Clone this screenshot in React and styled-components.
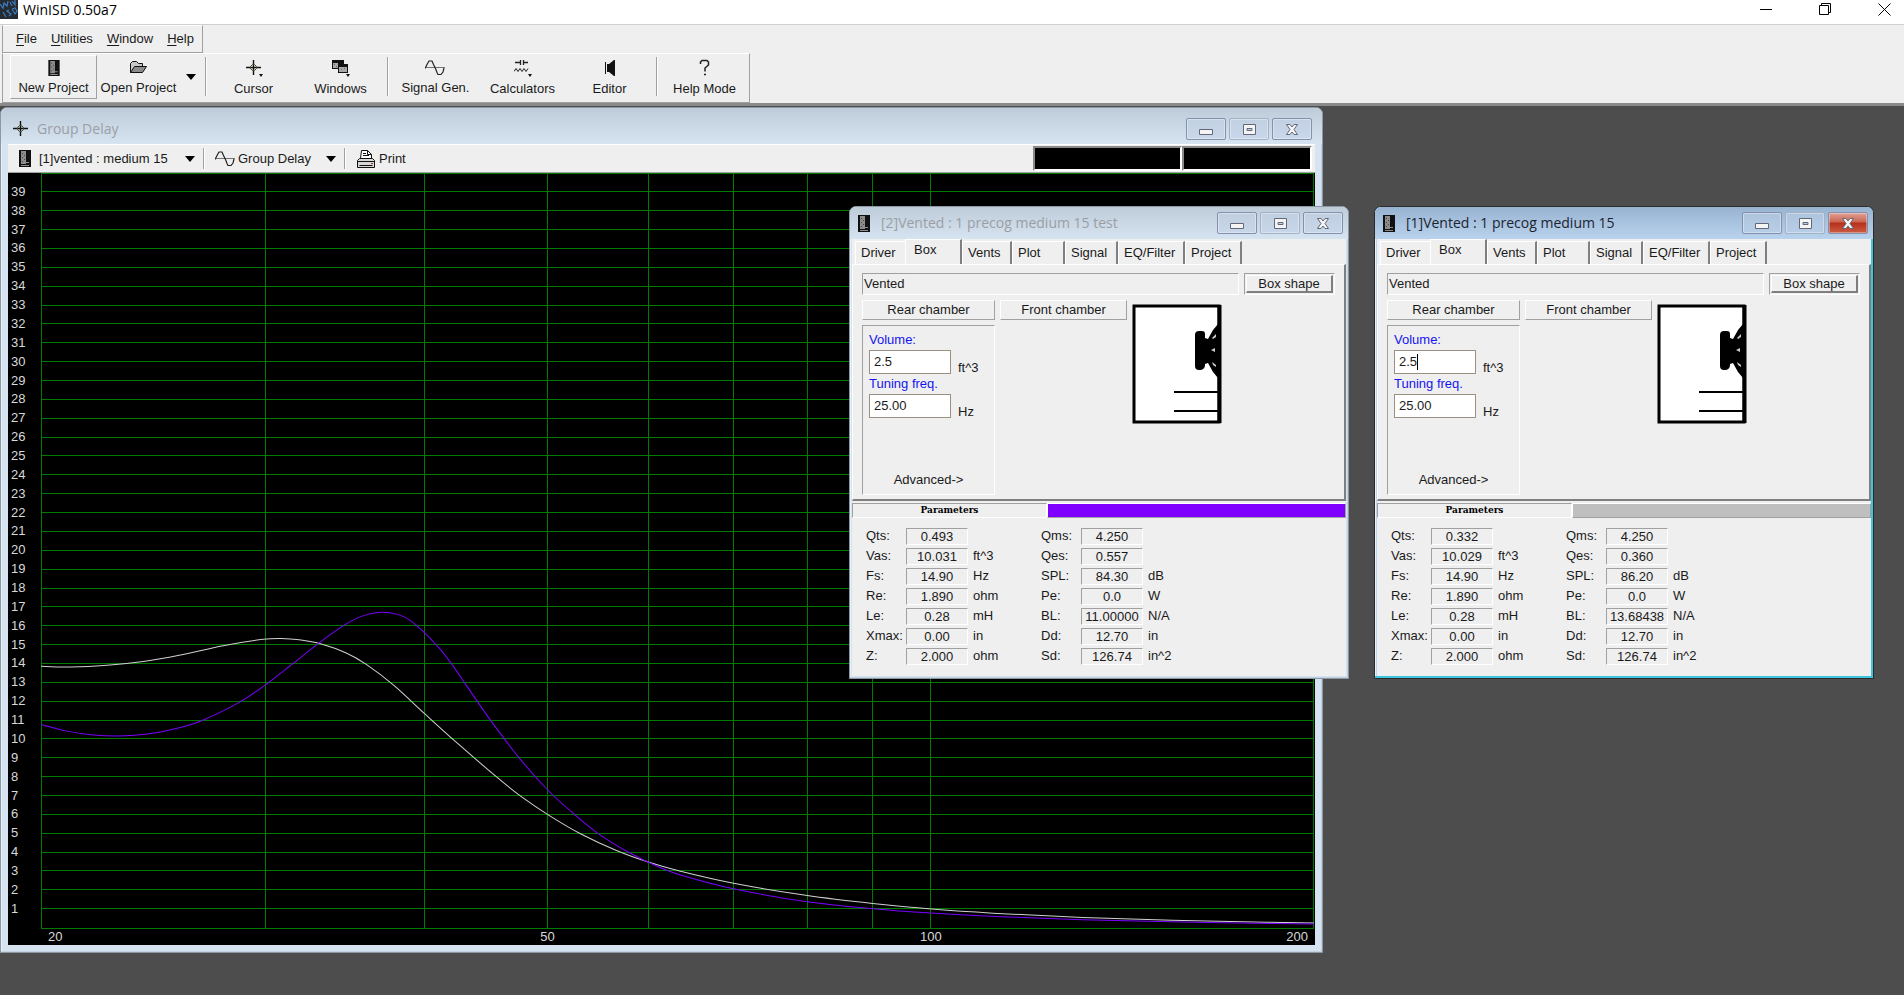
import { useState } from "react";
import styled, { createGlobalStyle, css } from "styled-components";

const GlobalStyle = createGlobalStyle`
  * { box-sizing: border-box; }

  body {
    margin: 0;
    background: #4d4d4d;
    color: #1a1a1a;
    font-family: "Liberation Sans", Arial, sans-serif;
    font-size: 13px;
    line-height: 20px;
  }

  button, input, select {
    font: inherit;
    color: inherit;
    margin: 0;
    padding: 0;
    border: none;
    border-radius: 0;
    background: none;
  }
`;

const sunken = css`
  border: 1px solid;
  border-color: #a0a0a0 #ffffff #ffffff #a0a0a0;
`;

const raised = css`
  border: 1px solid;
  border-color: #ffffff #a0a0a0 #a0a0a0 #ffffff;
`;

const Page = styled.div`
  display: flex;
  flex-direction: column;
  min-height: 100vh;
`;

const AppTitle = styled.header`
  display: flex;
  justify-content: space-between;
  height: 24px;
  background: #ffffff;
  color: #000;
  font-family: "Open Sans", "Noto Sans", sans-serif;
  font-size: 14px;

  h1 {
    display: flex;
    gap: 5px;
    margin: 0;
    font-size: inherit;
    font-weight: 400;
  }
`;

const AppControls = styled.div`
  display: flex;
  gap: 19px;
  height: 18px;

  button {
    display: flex;
    align-items: center;
    justify-content: center;
    width: 40px;
  }
`;

const Bars = styled.div`
  background: #efefef;
  border-top: 1px solid #d0d0d0;
  border-bottom: 3px solid #8a8a8a;
`;

const MenuBar = styled.nav`
  display: flex;
  align-items: center;
  gap: 14px;
  width: fit-content;
  height: 28px;
  padding: 0 8px 0 13px;
  margin-left: 2px;
  ${raised}
  border-left-color: #a0a0a0;

  u { text-underline-offset: 2px; }
`;

const ToolBar = styled.div`
  display: flex;
  width: fit-content;
  height: 50px;
  padding: 1px 1px 3px 7px;
  margin-left: 2px;
  ${raised}
  border-left-color: #a0a0a0;
`;

const ToolButton = styled.button`
  display: flex;
  flex-direction: column;
  align-items: center;
  gap: 2px;
  width: ${(p) => p.$width || 87}px;
  padding-top: 4px;
  white-space: nowrap;
  ${(p) => p.$raised && raised}

  svg { display: block; }
`;

const DropButton = styled.button`
  display: flex;
  align-items: center;
  justify-content: center;
  width: 22px;
`;

const Separator = styled.span`
  align-self: stretch;
  width: 2px;
  margin: ${(p) => p.$margin || "2px 3px 3px"};
  border-left: 1px solid #a0a0a0;
  border-right: 1px solid #ffffff;
`;

const Desktop = styled.main`
  position: relative;
  flex: 1;
  overflow: hidden;
`;

const Frame = styled.section`
  position: absolute;
  left: ${(p) => p.$x}px;
  top: ${(p) => p.$y}px;
  width: ${(p) => p.$w}px;
  padding: 0 ${(p) => p.$pad}px ${(p) => p.$pad}px;
  background: ${(p) => (p.$active ? "#b9d4ef" : "#d6e4f2")};
  border: 1px solid ${(p) => (p.$active ? "#2b2b2b" : "#8d98a5")};
  border-radius: 7px 7px 0 0;
  box-shadow: ${(p) =>
    p.$active ? "inset -2px -2px 0 #3fc4e0, inset 1px 1px 0 #e6f3ff" : "inset -1px -1px 0 #c3d2e0, inset 1px 1px 0 #e8f0f8"};
`;

const TitleRow = styled.header`
  display: flex;
  align-items: center;
  gap: ${(p) => p.$gap}px;
  height: ${(p) => p.$h}px;
  margin: 0 -${(p) => p.$pad}px;
  padding: ${(p) => p.$inset};
  border-radius: 6px 6px 0 0;
  background: ${(p) =>
    p.$active ? "linear-gradient(#98b3d0, #b9d3ee)" : "linear-gradient(#becbd8, #d6e4f2)"};

  h2 {
    flex: 1;
    margin: 0;
    color: ${(p) => (p.$active ? "#1c2430" : "#9b9ea4")};
    font-family: "Open Sans", "Noto Sans", sans-serif;
    font-size: 14px;
    font-weight: 400;
    line-height: 20px;
  }
`;

const Captions = styled.div`
  display: flex;
  gap: 3px;
`;

const Caption = styled.button`
  display: flex;
  align-items: center;
  justify-content: center;
  width: 40px;
  height: 22px;
  border: 1px solid ${(p) => (p.$faint ? "#a3b1c4" : "#8291b0")};
  border-radius: 2px;
  box-shadow: inset 0 0 0 1px rgba(255, 255, 255, 0.35);
  background: ${(p) =>
    p.$red ? "linear-gradient(#e0a094, #cc6450 45%, #b5301a 50%, #cc5c44)" : "rgba(190, 205, 228, 0.5)"};
`;

const GraphBar = styled.div`
  display: flex;
  align-items: center;
  height: 29px;
  padding-left: 11px;
  background: #efefef;
  border-top: 1px solid #ffffff;
  border-bottom: 1px solid #a0a0a0;
`;

const Picker = styled.label`
  display: grid;
  grid-template-columns: auto 1fr;
  align-items: center;
  gap: ${(p) => p.$gap}px;

  select {
    width: ${(p) => p.$w}px;
    appearance: none;
    outline: none;
    background: url("data:image/svg+xml,%3Csvg xmlns='http://www.w3.org/2000/svg' width='10' height='6'%3E%3Cpath d='M0 0h10L5 6z'/%3E%3C/svg%3E") no-repeat right center;
  }
`;

const PrintButton = styled.button`
  display: flex;
  align-items: center;
  gap: 3px;
  margin-left: 6px;
`;

const Readouts = styled.div`
  display: flex;
  align-self: stretch;
  margin-left: auto;
  padding: 1px 3px 1px 2px;

  span {
    background: #000;
    border: 2px solid;
    border-color: #8a8a8a #ffffff #ffffff #8a8a8a;
  }

  span:first-child { width: 149px; }
  span:last-child { width: 130px; }
`;

const Chart = styled.svg`
  display: block;
  width: 100%;
  background: #000;
  fill: none;

  text {
    fill: #d8d8d8;
    font-size: 13px;
  }
`;

const Body = styled.div`
  background: #efefef;
  height: 437px;
`;

const Tabs = styled.div`
  display: flex;
  align-items: flex-end;
  height: 25px;
  padding-left: 3px;
`;

const Tab = styled.button`
  width: ${(p) => p.$w}px;
  height: ${(p) => (p.$on ? 25 : 23)}px;
  padding-left: ${(p) => (p.$on ? 8 : 5)}px;
  padding-bottom: ${(p) => (p.$on ? 4 : 0)}px;
  text-align: left;
  white-space: nowrap;
  border-top: 1px solid #ffffff;
  border-left: 1px solid #ffffff;
  border-right: ${(p) => (p.$flat ? "none" : "2px solid #7f7f7f")};
`;

const TabPage = styled.div`
  display: flex;
  flex-direction: column;
  gap: 5px;
  height: 237px;
  padding: 8px 9px 5px;
  border: 1px solid;
  border-width: 1px 2px 2px 1px;
  border-color: #ffffff #7f7f7f #7f7f7f #ffffff;
`;

const KindRow = styled.div`
  display: flex;
  gap: 5px;
  height: 22px;
`;

const Kind = styled.div`
  flex: 1;
  padding-left: 1px;
  ${sunken}
`;

const ShapeSlot = styled.div`
  display: flex;
  width: 91px;
  padding: 1px;
  ${sunken}

  button {
    flex: 1;
    line-height: 16px;
    border: 1px solid;
    border-width: 1px 2px 2px 1px;
    border-color: #ffffff #7f7f7f #7f7f7f #ffffff;
  }
`;

const Chambers = styled.div`
  display: grid;
  grid-template-columns: 133px 127px 90px;
  grid-template-rows: 20px auto;
  gap: 5px;

  svg {
    display: block;
    grid-column: 3;
    grid-row: 1 / 3;
    margin-top: 4px;
  }
`;

const ChamberButton = styled.button`
  line-height: 18px;
  ${raised}
`;

const Rear = styled.div`
  display: flex;
  flex-direction: column;
  height: 170px;
  padding: 4px 6px;
  ${sunken}

  > button {
    margin-top: auto;
    line-height: 20px;
  }
`;

const Field = styled.div`
  position: relative;
  display: grid;
  grid-template-columns: 82px auto;
  grid-template-rows: 20px 24px;
  column-gap: 7px;

  label {
    grid-column: 1 / 3;
    color: #1414f0;
  }

  input {
    width: 82px;
    padding: 0 4px;
    background: #ffffff;
    border: 1px solid #9c9080;
    outline: none;
  }

  span { line-height: 36px; }
`;

const Caret = styled.i`
  position: absolute;
  left: 23px;
  top: 24px;
  width: 1px;
  height: 16px;
  background: #000;
`;

const ParamBar = styled.div`
  display: flex;
  height: 15px;
  margin-top: 2px;

  h3 {
    width: 195px;
    margin: 0;
    text-align: center;
    color: #000;
    font-family: "DejaVu Serif", serif;
    font-size: 9px;
    font-weight: 700;
    line-height: 13px;
    ${sunken}
  }

  div {
    flex: 1;
    background: ${(p) => p.$colour};
    ${raised}
  }
`;

const Params = styled.div`
  display: flex;
  gap: 43px;
  padding: 8px 14px;
`;

const ParamTable = styled.table`
  width: 132px;
  table-layout: fixed;
  border-collapse: collapse;
  white-space: nowrap;

  tr { height: 20px; }

  th {
    width: 40px;
    padding: 0;
    font-weight: 400;
    text-align: left;
  }

  td {
    width: 62px;
    padding: 0;
    text-align: center;
  }

  td + td {
    width: 30px;
    padding-left: 5px;
    text-align: left;
  }

  output {
    display: block;
    height: 17px;
    line-height: 16px;
    ${sunken}
  }
`;

const CabinetIcon = () => (
  <svg width="12" height="17" viewBox="0 0 12 17">
    <path fill="#111" d="M0 0h12v17H0z" />
    <path fill="#8c8c8c" d="M2 1h5v13H2zM7 12h3v1H7zM2 15h8v1H2z" />
    <path fill="#444" d="M3 3h1v1H3zM5 5h1v1H5zM3 7h1v1H3zM5 9h1v1H5zM3 11h1v1H3z" />
  </svg>
);

const FolderIcon = () => (
  <svg width="19" height="17" viewBox="0 0 19 17">
    <path fill="#c8c8c8" stroke="#111" d="M1.500 13.500v-9l2-2h4l2 2h4v3" />
    <path fill="#8c8c8c" stroke="#111" d="M1.500 13.500l4-6h12l-4 6z" />
  </svg>
);

const CrossIcon = ({ menu }) => (
  <svg width="18" height="18" viewBox="0 0 18 18" fill="none" stroke="#111">
    <path strokeWidth="1.4" d="M8.500 1v15M1 8.500h15" />
    <path stroke="#444422" d="M5.500 7.500l2-2h2l2 2v2l-2 2h-2l-2-2z" />
    {menu && <path fill="#111" stroke="none" d="M14 15h4l-2 3z" />}
  </svg>
);

const WindowsIcon = () => (
  <svg width="18" height="18" viewBox="0 0 18 18">
    <path fill="#111" d="M0 1h12v9H0zM6 5h10v9H6z" />
    <path fill="#a8a8a8" d="M1 4h5v5H1zM7 8h8v5H7z" />
    <path fill="#666" d="M2 5h1v1H2zM4 7h1v1H4zM9 10h1v1H9zM12 9h1v1h-1z" />
    <path fill="#111" d="M14 15h4l-2 3z" />
  </svg>
);

const WaveIcon = () => (
  <svg width="21" height="17" viewBox="0 0 21 17" fill="none" stroke="#222">
    <path strokeWidth="1.2" d="M0 9.500l2-4 2-3.500h3l1.500 3.500 2 4 1.500 4 1 2h3l2-2.500 1-4" />
    <path d="M0 8.500h20" strokeWidth=".6" />
  </svg>
);

const CircuitIcon = () => (
  <svg width="18" height="18" viewBox="0 0 18 18" fill="none" stroke="#222">
    <path strokeWidth="1.3" d="M1 3.500h5M10 3.500h4M6.500 1v5M9.500 1v5" />
    <path d="M0 12.500l2-3 2 3 2-3 2 3 2-3 2 3 2-3" />
    <path fill="#111" stroke="none" d="M14 15h4l-2 3z" />
  </svg>
);

const SpeakerIcon = () => (
  <svg width="12" height="18" viewBox="0 0 12 18">
    <path fill="#111" d="M3 5h2l5-4h1v16h-1l-5-4H3z" />
    <path fill="#111" d="M1 3h1v12H1z" />
    <path fill="#efefef" d="M4 2l1 2 1 1zM4 16l1-2 1-1zM2 8h1v2H2z" />
  </svg>
);

const HelpIcon = () => (
  <svg width="12" height="18" viewBox="0 0 12 18" fill="none" stroke="#222" strokeWidth="1.5">
    <path d="M1.500 5V3l1.500-1.500h5L9.500 3v3L6 9v3.500M5 15.500h2" />
  </svg>
);

const PrinterIcon = () => (
  <svg width="20" height="20" viewBox="0 0 20 20" fill="none" stroke="#111">
    <path fill="#fff" d="M4.500 9.500l1-8h6l4 4v4z" />
    <path d="M7 4.500h3M7 6.500h6M11.500 1.500v4h4" />
    <path fill="#d8d8d8" d="M1.500 11.500l2-2h13l2 2v7h-17zM1.500 12.500h17M3.500 16.500h13" />
    <path stroke="#d02020" d="M15 14.500h2" />
  </svg>
);

const LogoIcon = () => (
  <svg width="18" height="19" viewBox="0 0 18 19">
    <path fill="#252b33" d="M0 0h18v19H0z" />
    <path
      fill="none"
      stroke="#3f7fbf"
      strokeWidth="1.2"
      d="M0 4l3 4 1-5 3 3 1-5M10 2l2 4M12 1l3 4 0-5M3 12l3 5M9 10l-2 1 4 3-2 2M12 9l3 5 2-3-2-3-3 1"
    />
  </svg>
);

const ArrowIcon = () => (
  <svg width="10" height="6" viewBox="0 0 10 6">
    <path fill="#000" d="M0 0h10L5 6z" />
  </svg>
);

// box cross-section: driver on the baffle, vent below it
const BoxDrawing = () => (
  <svg width="90" height="120" viewBox="0 0 90 120" fill="none" stroke="#000">
    <path fill="#fff" strokeWidth="3" d="M2 2h85v116H2z" />
    <path strokeWidth="4" d="M87.500 1v118" />
    <path fill="#000" stroke="none" d="M63 31q0-4 4-4h3q3 0 3 3v4l3 1 5-9 5-6h3v54h-3l-5-6-5-9-3 1v1q0 4-4 5h-2q-4 0-4-4z" />
    <path fill="#ccc" stroke="none" d="M80 34l4-4v3l-3 2zM79 46l4-2v4zM80 58l4 3v2l-3-2z" />
    <path strokeWidth="2" d="M42 88h45M42 107h45" />
  </svg>
);

const glyphs = {
  min: <path d="M1.500 8.500h13v5h-13z" />,
  max: <path d="M2.500 3.500h12v10h-12zM6 7.500h5v2H6z" fillRule="evenodd" />,
  close: <path d="M2.500 3.500h3.500l2 2.500 2-2.500h3.500L10 8.500l3.500 5H10L8 11l-2 2.500H2.500L6 8.500z" />,
};

const CaptionButtons = ({ active }) => (
  <Captions>
    {["min", "max", "close"].map((kind) => (
      <Caption key={kind} aria-label={kind} $faint={kind === "max"} $red={active && kind === "close"}>
        <svg width="17" height="17" viewBox="0 0 17 17" fill="#f4f4f4" stroke="#626878">
          {glyphs[kind]}
        </svg>
      </Caption>
    ))}
  </Captions>
);

const PLOT_W = 1272;
const PLOT_H = 754;
const MAX_MS = 40;
const freqX = (hz) => PLOT_W * Math.log10(hz / 20);
const delayY = (ms) => PLOT_H - (ms * PLOT_H) / MAX_MS;

const curves = [
  {
    colour: "#d0d0d0",
    points: [
      [0, 493], [30, 493.7], [66, 492], [102, 488.2], [138, 482], [182, 472.3], [222, 466], [240, 465.2],
      [258, 466.5], [280, 470.7], [305, 479.6], [325, 491], [352, 511.5], [383, 540], [414, 568],
      [457, 605], [481, 624], [508, 642.2], [539, 660.3], [575, 677], [606, 688.3], [639, 697.8],
      [692, 709.8], [764, 721.8], [831, 730], [893, 735.8], [951, 739.6], [1041, 744], [1130, 746.8],
      [1272, 749.5],
    ],
  },
  {
    colour: "#7a00ff",
    points: [
      [0, 551], [26, 557.7], [50, 561.3], [77, 562.7], [102, 561.2], [129, 556.5], [158, 548.3],
      [198, 529], [225, 511], [251, 490.8], [278, 469.5], [303, 451.8], [321, 442.8], [341, 439],
      [361, 442.8], [376, 452.7], [399, 476], [412, 493], [425, 512], [450, 548], [479, 586],
      [508, 618.3], [535, 642.7], [557, 660.3], [588, 679.3], [615, 692.5], [639, 701.5],
      [692, 715.3], [764, 728], [831, 735.2], [889, 739.5], [965, 743.4], [1041, 746.2], [1152, 748.8],
      [1272, 750.5],
    ],
  },
];

// Catmull-Rom spline through the sampled points, tangents scaled to the step in x
const smooth = (pts) => {
  const slope = (i) => {
    const a = pts[Math.max(i - 1, 0)];
    const b = pts[Math.min(i + 1, pts.length - 1)];
    return (b[1] - a[1]) / (b[0] - a[0]);
  };
  return pts.slice(0, -1).reduce((d, [x, y], i) => {
    const [nx, ny] = pts[i + 1];
    const third = (nx - x) / 3;
    return `${d}C${x + third} ${y + third * slope(i)} ${nx - third} ${ny - third * slope(i + 1)} ${nx} ${ny}`;
  }, `M${pts[0]}`);
};

const GroupDelayChart = () => (
  <Chart viewBox="0 0 1306 771">
    <g transform="translate(33 0)">
      <g stroke="#007a00" shapeRendering="crispEdges">
        <rect x="0.5" y="0.5" width={PLOT_W - 1} height={PLOT_H} />
        {Array.from({ length: MAX_MS - 1 }, (_, i) => (
          <path key={i} d={`M0 ${delayY(i + 1)}H${PLOT_W}`} />
        ))}
        {[30, 40, 50, 60, 70, 80, 90, 100].map((hz) => (
          <path key={hz} d={`M${freqX(hz)} 0V${PLOT_H}`} />
        ))}
      </g>
      {curves.map((c) => (
        <path key={c.colour} d={smooth(c.points)} stroke={c.colour} />
      ))}
      {Array.from({ length: MAX_MS - 1 }, (_, i) => (
        <text key={i} x="-30" y={delayY(i + 1) + 4}>{i + 1}</text>
      ))}
      <text x="7" y="767">20</text>
      <text x={freqX(50)} y="767" textAnchor="middle">50</text>
      <text x={freqX(100)} y="767" textAnchor="middle">100</text>
      <text x="1266" y="767" textAnchor="end">200</text>
    </g>
  </Chart>
);

const GraphWindow = () => (
  <Frame $x={0} $y={1} $w={1323} $pad={7}>
    <TitleRow $h={36} $pad={7} $inset="6px 10px 0 11px" $gap={7}>
      <CrossIcon />
      <h2>Group Delay</h2>
      <CaptionButtons />
    </TitleRow>
    <GraphBar>
      <Picker $gap={8} $w={156}>
        <CabinetIcon />
        <select aria-label="Project">
          <option>[1]vented : medium 15</option>
          <option>[2]vented : medium 15 test</option>
        </select>
      </Picker>
      <Separator $margin="3px 10px 3px 8px" />
      <Picker $gap={2} $w={98}>
        <WaveIcon />
        <select aria-label="Graph">
          <option>Group Delay</option>
          <option>SPL</option>
        </select>
      </Picker>
      <Separator $margin="3px 4px 3px 8px" />
      <PrintButton><PrinterIcon />Print</PrintButton>
      <Readouts><span /><span /></Readouts>
    </GraphBar>
    <GroupDelayChart />
  </Frame>
);

const tabs = [
  ["Driver", 50], ["Box", 57], ["Vents", 50], ["Plot", 53], ["Signal", 53], ["EQ/Filter", 67], ["Project", 57],
];

const ProjectWindow = ({ id, x, y, title, colour, active, params }) => {
  const [tab, setTab] = useState("Box");
  const [volume, setVolume] = useState("2.5");
  const [tuning, setTuning] = useState("25.00");

  return (
    <Frame $x={x} $y={y} $w={500} $pad={2} $active={active}>
      <TitleRow $h={32} $pad={2} $inset="0 5px 0 8px" $gap={11} $active={active}>
        <CabinetIcon />
        <h2>{title}</h2>
        <CaptionButtons active={active} />
      </TitleRow>
      <Body>
        <Tabs role="tablist">
          {tabs.map(([name, w], i) => (
            <Tab
              key={name}
              role="tab"
              aria-selected={tab === name}
              $w={w}
              $on={tab === name}
              $flat={i === 0}
              onClick={() => setTab(name)}
            >
              {name}
            </Tab>
          ))}
        </Tabs>
        <TabPage>
          <KindRow>
            <Kind>Vented</Kind>
            <ShapeSlot><button>Box shape</button></ShapeSlot>
          </KindRow>
          <Chambers>
            <ChamberButton>Rear chamber</ChamberButton>
            <ChamberButton>Front chamber</ChamberButton>
            <BoxDrawing />
            <Rear>
              <Field>
                <label htmlFor={`volume${id}`}>Volume:</label>
                <input id={`volume${id}`} value={volume} onChange={(e) => setVolume(e.target.value)} />
                <span>ft^3</span>
                {active && <Caret />}
              </Field>
              <Field>
                <label htmlFor={`tuning${id}`}>Tuning freq.</label>
                <input id={`tuning${id}`} value={tuning} onChange={(e) => setTuning(e.target.value)} />
                <span>Hz</span>
              </Field>
              <button>Advanced-&gt;</button>
            </Rear>
          </Chambers>
        </TabPage>
        <ParamBar $colour={colour}>
          <h3>Parameters</h3>
          <div />
        </ParamBar>
        <Params>
          {params.map((rows, i) => (
            <ParamTable key={i}>
              <tbody>
                {rows.map(([name, value, unit]) => (
                  <tr key={name}>
                    <th scope="row">{name}:</th>
                    <td><output>{value}</output></td>
                    <td>{unit}</td>
                  </tr>
                ))}
              </tbody>
            </ParamTable>
          ))}
        </Params>
      </Body>
    </Frame>
  );
};

const driverParams = ({ qts, vas, qes, spl, bl }) => [
  [
    ["Qts", qts, ""],
    ["Vas", vas, "ft^3"],
    ["Fs", "14.90", "Hz"],
    ["Re", "1.890", "ohm"],
    ["Le", "0.28", "mH"],
    ["Xmax", "0.00", "in"],
    ["Z", "2.000", "ohm"],
  ],
  [
    ["Qms", "4.250", ""],
    ["Qes", qes, ""],
    ["SPL", spl, "dB"],
    ["Pe", "0.0", "W"],
    ["BL", bl, "N/A"],
    ["Dd", "12.70", "in"],
    ["Sd", "126.74", "in^2"],
  ],
];

export default function App() {
  return (
    <Page>
      <GlobalStyle />
      <AppTitle>
        <h1><LogoIcon />WinISD 0.50a7</h1>
        <AppControls>
          <button aria-label="Minimize">
            <svg width="12" height="13" stroke="#000"><path d="M0 6.500h12" /></svg>
          </button>
          <button aria-label="Restore">
            <svg width="13" height="13" fill="none" stroke="#000">
              <path d="M.5 2.500h9v9h-9zM2.500 2.500v-2h9v9h-2" />
            </svg>
          </button>
          <button aria-label="Close">
            <svg width="13" height="13" stroke="#000"><path d="M.5 .5l12 12M12.500 .5l-12 12" /></svg>
          </button>
        </AppControls>
      </AppTitle>
      <Bars>
        <MenuBar>
          <button><u>F</u>ile</button>
          <button><u>U</u>tilities</button>
          <button><u>W</u>indow</button>
          <button><u>H</u>elp</button>
        </MenuBar>
        <ToolBar>
          <ToolButton $raised><CabinetIcon />New Project</ToolButton>
          <ToolButton $width={83}><FolderIcon />Open Project</ToolButton>
          <DropButton aria-label="Recent projects"><ArrowIcon /></DropButton>
          <Separator />
          <ToolButton><CrossIcon menu />Cursor</ToolButton>
          <ToolButton><WindowsIcon />Windows</ToolButton>
          <Separator />
          <ToolButton><WaveIcon />Signal Gen.</ToolButton>
          <ToolButton><CircuitIcon />Calculators</ToolButton>
          <ToolButton><SpeakerIcon />Editor</ToolButton>
          <Separator />
          <ToolButton><HelpIcon />Help Mode</ToolButton>
        </ToolBar>
      </Bars>
      <Desktop>
        <GraphWindow />
        <ProjectWindow
          id={2}
          x={849}
          y={100}
          title="[2]Vented : 1 precog medium 15 test"
          colour="#7f00ff"
          params={driverParams({ qts: "0.493", vas: "10.031", qes: "0.557", spl: "84.30", bl: "11.00000" })}
        />
        <ProjectWindow
          id={1}
          x={1374}
          y={100}
          title="[1]Vented : 1 precog medium 15"
          colour="#bfbfbf"
          active
          params={driverParams({ qts: "0.332", vas: "10.029", qes: "0.360", spl: "86.20", bl: "13.68438" })}
        />
      </Desktop>
    </Page>
  );
}
